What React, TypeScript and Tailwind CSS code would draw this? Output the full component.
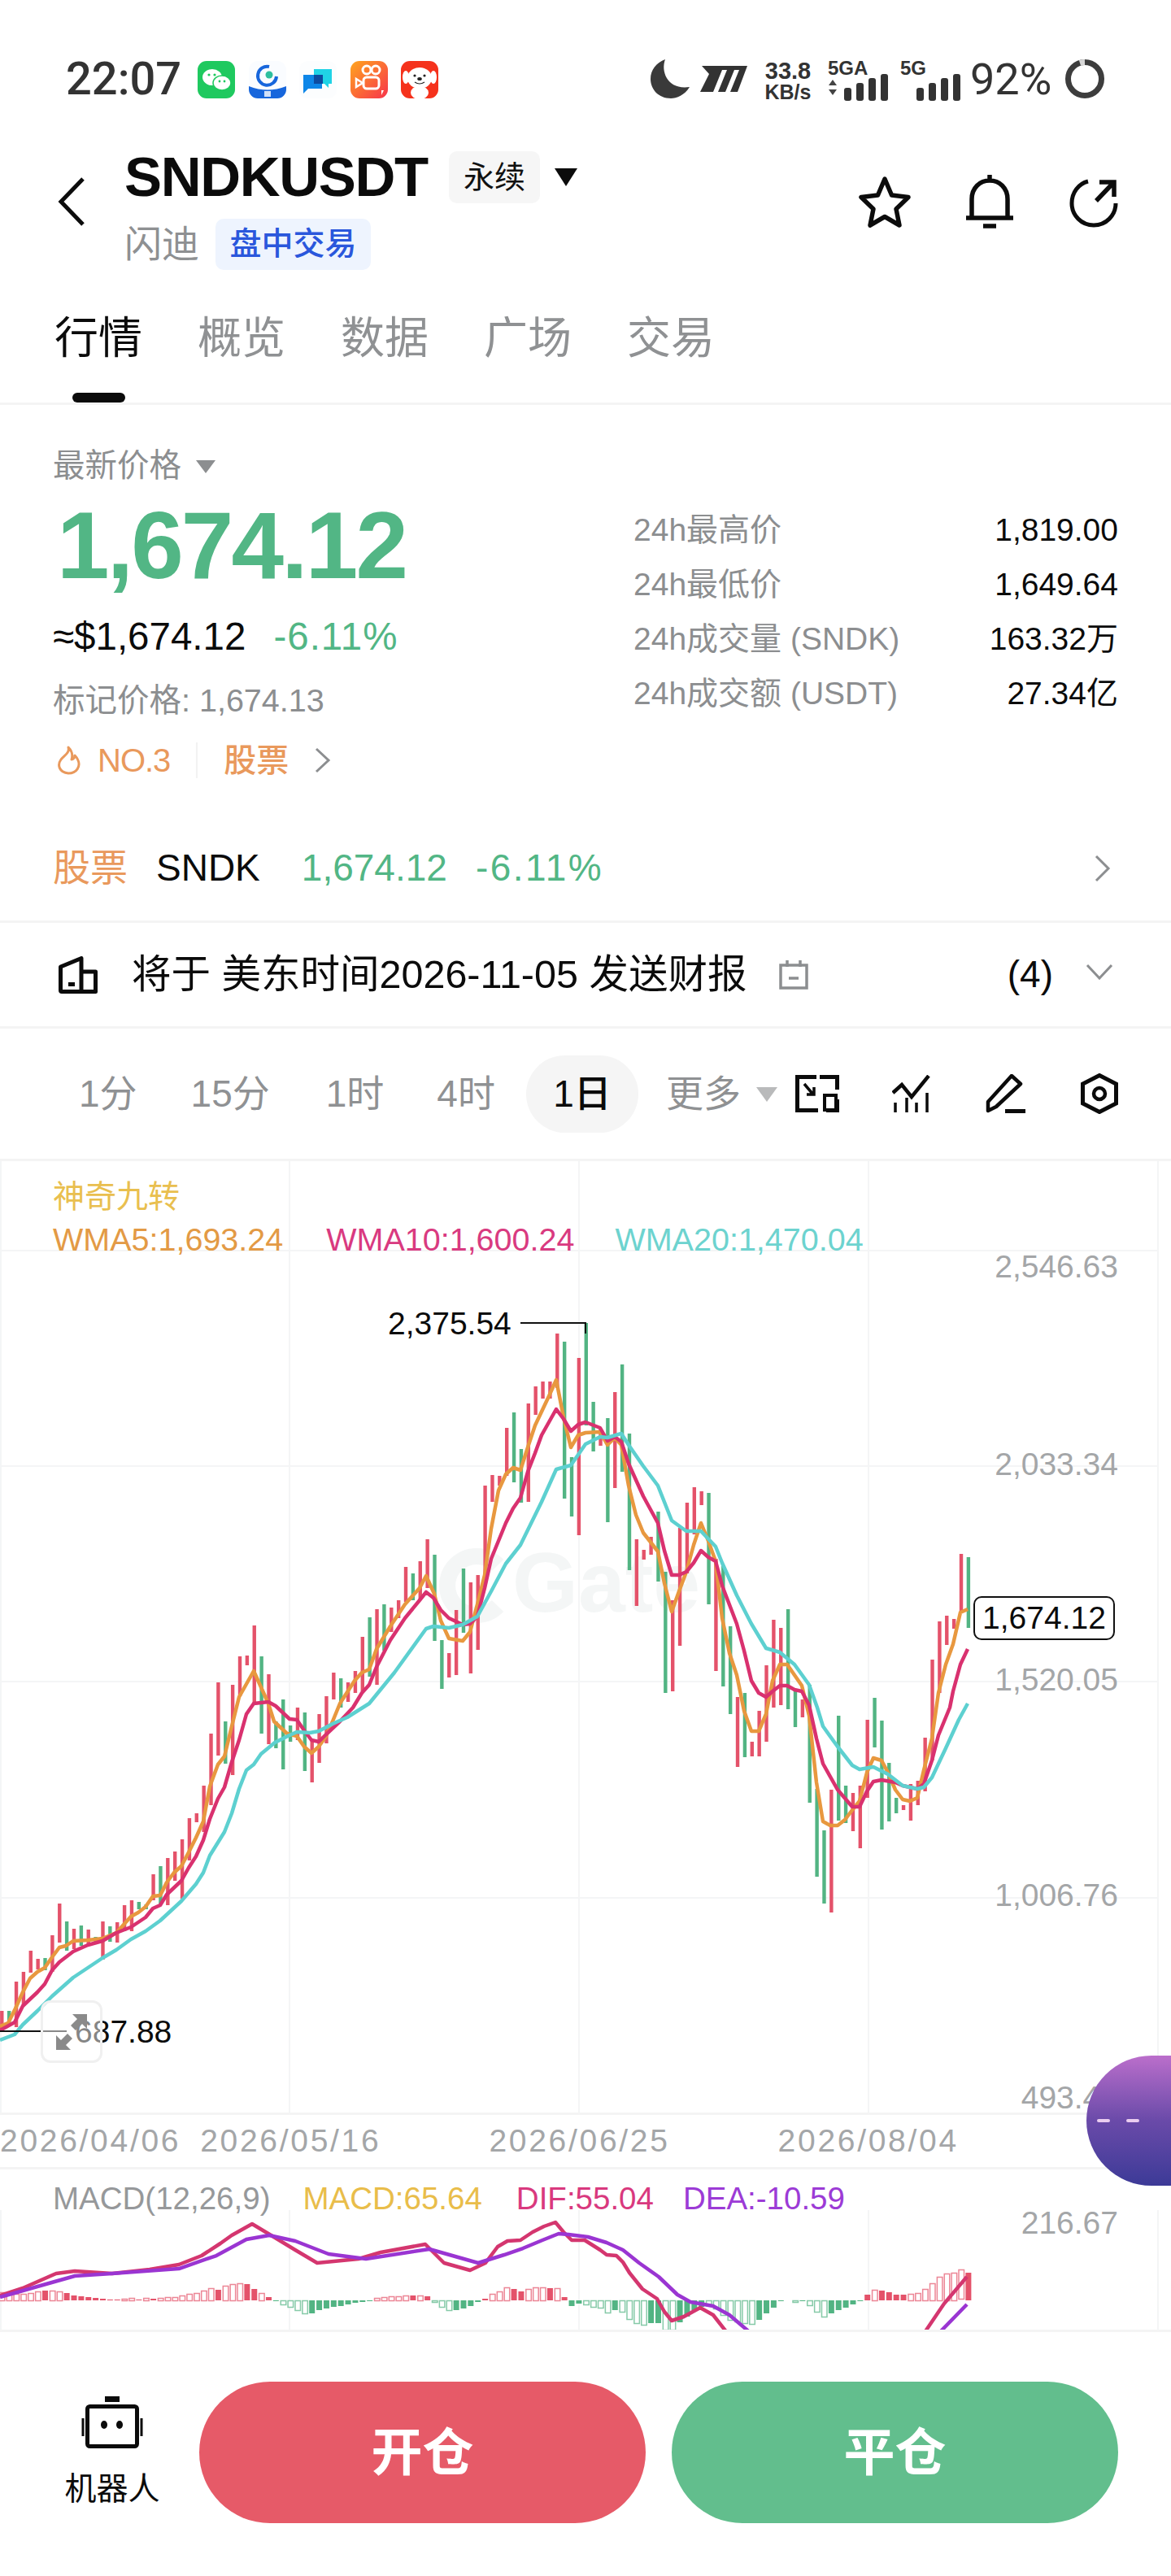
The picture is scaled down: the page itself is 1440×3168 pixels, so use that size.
const RED = "#e4526a";
const GREEN = "#52b483";

// [top, bottom, green?] per daily bar, x comes from the index
const candles: [number, number, number][] = [
  [2473, 2497, 0], [2473, 2490, 1], [2437, 2493, 0], [2425, 2467, 0], [2399, 2426, 0], [2409, 2422, 0], [2408, 2423, 1], [2380, 2425, 0],
  [2341, 2389, 0], [2363, 2399, 1], [2372, 2397, 0], [2368, 2393, 1], [2373, 2392, 0], [2382, 2390, 1], [2363, 2410, 0], [2369, 2388, 1],
  [2364, 2389, 0], [2343, 2375, 0], [2337, 2375, 0], [2339, 2348, 1], [2342, 2348, 1], [2305, 2337, 0], [2295, 2342, 1], [2285, 2343, 0],
  [2277, 2313, 0], [2262, 2335, 0], [2236, 2288, 0], [2230, 2241, 0], [2196, 2253, 0], [2132, 2220, 0], [2069, 2159, 0], [2117, 2169, 1],
  [2072, 2183, 0], [2037, 2086, 0], [2036, 2048, 0], [1999, 2095, 0], [2037, 2132, 1], [2059, 2145, 0], [2117, 2150, 1], [2090, 2176, 1],
  [2122, 2142, 1], [2100, 2140, 0], [2106, 2178, 1], [2140, 2192, 0], [2108, 2168, 0], [2086, 2144, 0], [2057, 2090, 0], [2064, 2100, 1],
  [2069, 2093, 0], [2055, 2082, 0], [2013, 2080, 0], [1989, 2062, 1], [1979, 2072, 0], [1973, 2030, 1], [1977, 2007, 0], [1968, 1990, 0],
  [1927, 1970, 0], [1935, 1968, 1], [1920, 1967, 0], [1893, 1953, 0], [1912, 2018, 1], [2017, 2077, 1], [2033, 2063, 0], [1980, 2060, 0],
  [1929, 2008, 1], [1946, 2058, 0], [1937, 2029, 0], [1827, 1947, 0], [1814, 1847, 0], [1815, 1827, 0], [1756, 1815, 0], [1737, 1823, 1],
  [1782, 1848, 1], [1726, 1847, 0], [1705, 1740, 0], [1699, 1720, 0], [1699, 1720, 0], [1640, 1707, 0], [1650, 1843, 1], [1792, 1865, 1],
  [1670, 1888, 0], [1627, 1753, 1], [1724, 1785, 1], [1757, 1778, 0], [1744, 1872, 1], [1712, 1830, 0], [1678, 1810, 1], [1763, 1931, 1],
  [1893, 1975, 0], [1906, 1918, 0], [1890, 1912, 0], [1859, 1945, 1], [1933, 2082, 1], [1968, 2080, 0], [1879, 2024, 0], [1848, 1935, 0],
  [1829, 1887, 0], [1834, 1851, 0], [1836, 1973, 1], [1917, 2055, 0], [1925, 2074, 1], [2000, 2108, 1], [2087, 2173, 0], [2082, 2161, 1],
  [2142, 2160, 0], [2104, 2160, 0], [2048, 2142, 0], [1992, 2100, 0], [2002, 2097, 0], [1979, 2102, 1], [2078, 2124, 1], [2090, 2112, 0],
  [2072, 2217, 1], [2200, 2308, 1], [2251, 2341, 1], [2201, 2352, 0], [2110, 2239, 1], [2196, 2242, 1], [2205, 2252, 0], [2196, 2273, 0],
  [2115, 2211, 0], [2088, 2149, 1], [2116, 2250, 1], [2168, 2240, 1], [2211, 2230, 1], [2220, 2226, 0], [2194, 2239, 0], [2190, 2220, 0],
  [2137, 2203, 0], [2041, 2165, 0], [1994, 2082, 0], [1987, 2023, 0], [1991, 2003, 0], [1911, 1983, 0], [1915, 2002, 1],
];

const wma5 =
  "0,2492 10,2488 19,2470 28,2450 37,2433 46,2425 55,2420 64,2407 73,2395 81,2393 90,2387 108,2386 126,2384 143,2377 152,2367 161,2357 170,2352 179,2345 188,2332 197,2331 205,2315 214,2303 223,2295 232,2278 241,2260 250,2240 258,2197 268,2170 276,2160 285,2123 294,2087 312,2055 330,2095 337,2117 353,2132 365,2135 374,2148 383,2156 392,2148 401,2135 409,2117 418,2095 436,2067 445,2057 454,2053 463,2028 480,2000 498,1973 516,1953 524,1938 534,1960 542,1993 552,2015 569,2018 578,2007 587,1973 596,1937 604,1880 613,1833 622,1813 631,1805 640,1808 649,1780 658,1753 675,1717 684,1697 693,1743 702,1780 711,1765 720,1762 738,1761 747,1777 756,1768 764,1777 773,1827 782,1863 791,1885 809,1908 817,1947 826,1982 835,1957 844,1933 853,1900 862,1873 871,1895 880,1920 888,1990 897,2033 906,2060 915,2104 924,2129 933,2129 942,2108 950,2067 959,2047 968,2047 977,2060 986,2073 995,2110 1004,2192 1012,2240 1021,2245 1030,2245 1039,2238 1048,2226 1057,2215 1066,2180 1074,2162 1084,2165 1092,2180 1101,2201 1110,2213 1119,2215 1128,2211 1136,2177 1146,2138 1154,2082 1163,2047 1172,2022 1181,1983 1190,1979";
const wma10 =
  "0,2497 18,2487 28,2467 46,2450 55,2440 64,2423 73,2413 90,2400 108,2392 126,2387 143,2377 161,2370 179,2358 188,2347 197,2343 205,2330 223,2313 232,2297 241,2283 250,2263 258,2237 268,2212 276,2198 285,2167 294,2140 303,2108 312,2095 330,2093 339,2098 356,2114 365,2115 374,2128 383,2140 392,2142 401,2133 418,2117 434,2100 445,2082 454,2072 463,2050 480,2017 498,1990 516,1968 524,1958 533,1965 542,1980 552,1990 569,1998 578,1997 587,1988 596,1953 604,1917 622,1873 631,1855 640,1842 649,1810 658,1787 666,1765 684,1733 693,1745 702,1760 711,1752 720,1749 738,1756 747,1772 756,1767 764,1773 773,1800 791,1840 809,1873 817,1907 826,1937 835,1937 844,1933 853,1922 862,1907 871,1915 880,1920 888,1950 906,1997 915,2030 924,2067 933,2082 942,2087 950,2080 959,2073 968,2073 977,2078 986,2080 995,2097 1004,2138 1012,2169 1030,2201 1048,2222 1057,2222 1066,2203 1074,2191 1084,2189 1101,2192 1110,2196 1128,2200 1136,2194 1146,2165 1154,2134 1168,2100 1172,2080 1181,2047 1190,2028";
const wma20 =
  "0,2509 18,2502 28,2490 46,2473 64,2455 90,2432 126,2408 143,2398 161,2385 179,2375 197,2362 223,2338 241,2317 250,2303 258,2282 276,2253 285,2230 294,2200 303,2177 312,2170 321,2157 338,2143 354,2135 365,2130 381,2131 392,2129 409,2120 427,2112 454,2095 485,2057 524,2003 533,2000 552,2002 569,1998 587,1988 604,1957 622,1923 640,1900 666,1847 684,1807 702,1802 720,1776 738,1767 747,1768 764,1763 773,1777 791,1803 809,1827 826,1870 844,1883 862,1883 880,1902 888,1922 906,1962 924,1997 942,2027 959,2032 977,2047 995,2072 1005,2100 1012,2123 1030,2148 1048,2171 1057,2176 1074,2173 1092,2182 1110,2196 1128,2200 1136,2198 1146,2186 1163,2150 1179,2115 1190,2095";

const dif =
  "0,2823 28,2814 69,2796 92,2793 138,2796 184,2791 220,2785 248,2774 271,2759 285,2749 310,2735 335,2750 363,2767 390,2783 441,2778 468,2770 523,2760 546,2783 578,2792 597,2783 612,2763 624,2756 640,2755 655,2745 669,2738 683,2733 693,2745 703,2755 719,2755 738,2767 746,2773 758,2774 766,2782 774,2795 790,2815 808,2827 817,2843 826,2854 841,2849 861,2838 877,2847 895,2870";
const difEnd = "1136,2870 1161,2833 1189,2800";
const dea =
  "0,2825 46,2812 92,2799 138,2796 220,2790 266,2774 303,2754 331,2749 363,2756 404,2772 450,2778 528,2766 588,2783 620,2773 643,2765 667,2755 687,2747 699,2748 723,2751 746,2758 766,2767 786,2783 810,2800 833,2822 849,2831 877,2836 897,2847 924,2870";
const deaEnd = "1154,2870 1189,2834";

// [height above the zero line in px, hollow?]
const hist: [number, number][] = [
  [10, 1], [9, 1], [8, 1], [8, 1], [9, 1], [11, 1], [12, 0], [12, 1], [11, 1], [9, 0], [6, 0], [5, 0], [4, 0], [3, 0], [2, 0], [1, 0],
  [1, 0], [2, 1], [3, 1], [1, 0], [3, 1], [2, 0], [3, 1], [4, 1], [4, 1], [6, 1], [8, 1], [9, 1], [12, 1], [15, 1], [13, 0], [18, 1],
  [20, 1], [21, 1], [20, 0], [14, 0], [9, 1], [4, 0], [-1, 0], [-5, 1], [-8, 1], [-12, 1], [-16, 1], [-16, 0], [-12, 0], [-10, 0], [-8, 0], [-7, 0],
  [-5, 0], [-3, 0], [-2, 0], [-1, 0], [3, 1], [4, 1], [5, 1], [5, 1], [6, 1], [6, 0], [6, 1], [5, 0], [-2, 1], [-8, 1], [-12, 1], [-12, 0],
  [-10, 0], [-7, 0], [-2, 0], [2, 0], [8, 1], [11, 1], [16, 1], [14, 0], [11, 0], [14, 1], [16, 1], [16, 1], [15, 0], [15, 1], [4, 0], [-7, 0],
  [-4, 0], [-5, 1], [-8, 1], [-9, 1], [-15, 1], [-12, 0], [-14, 1], [-23, 1], [-28, 1], [-30, 1], [-28, 0], [-28, 0], [-36, 1], [-36, 1], [-27, 0], [-20, 0],
  [-12, 0], [-8, 0], [-6, 1], [-10, 1], [-18, 1], [-24, 1], [-26, 1], [-28, 1], [-29, 1], [-24, 0], [-16, 0], [-9, 0], [-1, 0], [0, 0], [-2, 1], [-1, 0],
  [-6, 1], [-14, 1], [-20, 1], [-16, 0], [-12, 0], [-9, 0], [-5, 0], [-1, 0], [7, 0], [13, 1], [12, 0], [10, 0], [7, 0], [7, 0], [8, 1], [9, 1],
  [14, 1], [21, 1], [29, 1], [33, 1], [34, 1], [38, 1], [34, 0],
];

const barX = (i: number) => 2.3 + i * 8.87;

function StatusBar() {
  return (
    <div className="flex h-[170px] items-start pl-[81px] pt-[73px] text-[#333]">
      <span className="w-[162px] font-['Roboto'] text-[56px] font-medium leading-[48px]">22:07</span>
      <div className="flex gap-[16.5px] pt-[2px]">
        <svg width="46" height="46" viewBox="0 0 46 46">
          <rect width="46" height="46" rx="11" fill="#1fc95f" />
          <ellipse cx="18" cy="20" rx="12" ry="10" fill="#fff" />
          <ellipse cx="30" cy="27" rx="11" ry="9" fill="#fff" stroke="#1fc95f" strokeWidth="1.5" />
          <circle cx="14" cy="17" r="1.6" fill="#1fc95f" />
          <circle cx="21" cy="17" r="1.6" fill="#1fc95f" />
          <circle cx="27" cy="25" r="1.4" fill="#1fc95f" />
          <circle cx="33" cy="25" r="1.4" fill="#1fc95f" />
        </svg>
        <svg width="46" height="46" viewBox="0 0 46 46">
          <rect width="46" height="46" rx="11" fill="#fafcff" />
          <path d="M0 31Q23 40 46 31V35A11 11 0 0 1 35 46H11A11 11 0 0 1 0 35Z" fill="#1766dc" />
          <path d="M25 7A11.5 11.5 0 1 0 34 19" fill="none" stroke="#1766dc" strokeWidth="4" />
          <circle cx="25" cy="17" r="4.5" fill="#2fbf9e" />
          <rect x="19" y="37" width="8" height="7" fill="#fff" opacity=".8" />
        </svg>
        <svg width="46" height="46" viewBox="0 0 46 46">
          <rect width="46" height="46" rx="11" fill="#fcfdfe" />
          <path d="M18 10H40V28H36V33L31 28H18Z" fill="#20d3e6" />
          <path d="M5 17H28V34H11L5 40Z" fill="#0d86e8" />
          <rect x="18" y="17" width="11" height="11" fill="#0c4ba0" />
        </svg>
        <svg width="46" height="46" viewBox="0 0 46 46">
          <defs>
            <linearGradient id="ks" x1="0" y1="0" x2="1" y2="1">
              <stop offset="0" stopColor="#ffa51f" />
              <stop offset="1" stopColor="#f7344b" />
            </linearGradient>
          </defs>
          <rect width="46" height="46" rx="11" fill="url(#ks)" />
          <circle cx="20" cy="11" r="5" fill="none" stroke="#fff" strokeWidth="3" />
          <circle cx="31" cy="11" r="5" fill="none" stroke="#fff" strokeWidth="3" />
          <rect x="16" y="20" width="19" height="14" rx="4" fill="none" stroke="#fff" strokeWidth="3" />
          <path d="M15 27L7 22V32Z" fill="none" stroke="#fff" strokeWidth="2.5" />
          <path d="M38 36L41 36L38 42" fill="#fff" />
        </svg>
        <svg width="46" height="46" viewBox="0 0 46 46">
          <rect width="46" height="46" rx="11" fill="#f5321c" />
          <ellipse cx="23" cy="39" rx="11" ry="8" fill="#fff" />
          <ellipse cx="23" cy="21" rx="15" ry="13" fill="#fff" />
          <ellipse cx="6" cy="20" rx="4" ry="8" fill="#fff" />
          <ellipse cx="40" cy="20" rx="4" ry="8" fill="#fff" />
          <circle cx="17" cy="18" r="1.6" fill="#222" />
          <circle cx="29" cy="18" r="1.6" fill="#222" />
          <ellipse cx="23" cy="22" rx="2.8" ry="2" fill="#222" />
          <path d="M17 26Q23 30 29 26" fill="none" stroke="#222" strokeWidth="1.2" />
        </svg>
      </div>
      <div className="ml-[261px] flex items-start">
        <svg width="48" height="48" viewBox="0 0 48 48" className="mr-[13px]">
          <path d="M18 0C12 16 22 38 48 34C42 44 32 48 25 48C10 48 0 37 0 24C0 13 7 4 18 0Z" fill="#3a3a3a" />
        </svg>
        <svg width="58" height="34" viewBox="0 0 58 34" className="mr-[20px] mt-[8px]">
          <path d="M2 0H58L46 32H37L48 5H42L31 32H22L33 5H27L16 32H0L11 10Z" fill="#333" />
        </svg>
        <div className="mr-[19px] flex w-[60px] flex-col items-center font-['Liberation_Sans'] text-[29px] font-bold leading-[28px]">
          <span>33.8</span>
          <span className="text-[25px] leading-[24px]">KB/s</span>
        </div>
        <div className="w-[88px]">
          <div className="font-['Liberation_Sans'] text-[24px] font-bold leading-[22px]">5GA</div>
          <svg width="76" height="33" viewBox="0 0 76 33" className="-mt-[4px]">
            <path d="M1 14L6 7L11 14ZM1 19L6 26L11 19Z" fill="#444" />
            <rect x="20" y="17" width="9" height="16" rx="3" fill="#333" />
            <rect x="35" y="11" width="9" height="22" rx="3" fill="#333" />
            <rect x="50" y="5" width="9" height="28" rx="3" fill="#333" />
            <rect x="65" y="0" width="9" height="33" rx="3" fill="#333" />
          </svg>
        </div>
        <div className="ml-[1px] w-[87px]">
          <div className="font-['Liberation_Sans'] text-[24px] font-bold leading-[22px]">5G</div>
          <svg width="76" height="33" viewBox="0 0 76 33" className="-mt-[4px]">
            <rect x="20" y="17" width="9" height="16" rx="3" fill="#333" />
            <rect x="35" y="11" width="9" height="22" rx="3" fill="#333" />
            <rect x="50" y="5" width="9" height="28" rx="3" fill="#333" />
            <rect x="65" y="0" width="9" height="33" rx="3" fill="#333" />
          </svg>
        </div>
        <span className="-ml-[1px] mt-[2px] font-['Roboto'] text-[54px] leading-[46px]">92%</span>
        <svg width="50" height="50" viewBox="0 0 50 50" className="ml-[16px] -mt-[1px]">
          <circle cx="25" cy="25" r="20.5" fill="none" stroke="#3d3d3d" strokeWidth="7" />
          <path d="M19 5.5A20.5 20.5 0 0 1 25 4.5" fill="none" stroke="#d8d8d8" strokeWidth="7" />
        </svg>
      </div>
    </div>
  );
}

function Header() {
  return (
    <div className="flex h-[178px] pl-[71px] pr-[65px]">
      <svg width="34" height="62" viewBox="0 0 34 62" className="mt-[47px] shrink-0">
        <path d="M31 3L4 31L31 59" fill="none" stroke="#0c0c0c" strokeWidth="5" />
      </svg>
      <div className="ml-[48px]">
        <div className="mt-[16px] flex h-[64px] items-center">
          <span className="text-[69px] font-bold leading-[64px] tracking-[-1.3px] text-[#0b0b0b]">SNDKUSDT</span>
          <span className="ml-[26px] flex h-[64px] w-[112px] items-center justify-center rounded-[10px] bg-[#f6f6f6] text-[38px] text-[#111]">永续</span>
          <span className="ml-[18px] h-0 w-0 border-x-[14px] border-t-[22px] border-x-transparent border-t-[#0c0c0c]" />
        </div>
        <div className="mt-[19px] flex h-[63px] items-center">
          <span className="text-[46px] text-[#8e9092]">闪迪</span>
          <span className="ml-[20px] flex h-[63px] w-[191px] items-center justify-center rounded-[10px] bg-[#eef4fe] text-[39px] font-medium text-[#2a57dc]">盘中交易</span>
        </div>
      </div>
      <div className="ml-auto mt-[45px] flex h-[66px] items-start">
        <svg width="66" height="64" viewBox="0 0 66 64" className="mt-[1px]">
          <path d="M33 4L41.5 24L62 26.5L47 41L51 61L33 50.5L15 61L19 41L4 26.5L24.5 24Z" fill="none" stroke="#0c0c0c" strokeWidth="5.5" strokeLinejoin="round" />
        </svg>
        <svg width="58" height="66" viewBox="0 0 58 66" className="ml-[67px]">
          <path d="M29 0V7M7 52V30C7 16 17 7 29 7C41 7 51 16 51 30V52M0 53H58M21 63H37" fill="none" stroke="#0c0c0c" strokeWidth="5.5" />
        </svg>
        <svg width="60" height="60" viewBox="0 0 60 60" className="ml-[69px] mt-[5px]">
          <path d="M23 3C11 6 3 17 3 30C3 45 15 57 30 57C45 57 57 45 57 30" fill="none" stroke="#0c0c0c" strokeWidth="5" />
          <path d="M33 27L53 6M37 4H55V22" fill="none" stroke="#0c0c0c" strokeWidth="5.5" />
        </svg>
      </div>
    </div>
  );
}

function Tabs() {
  return (
    <div className="flex h-[150px] gap-[68px] border-b-[3px] border-[#f4f4f4] pl-[67px] pt-[34px] text-[54px] leading-[68px] text-[#8f9193]">
      <div className="flex w-[108px] flex-col items-center">
        <span className="text-[#0b0b0b]">行情</span>
        <span className="mt-[33px] h-[12px] w-[65px] rounded-[6px] bg-[#0b0b0b]" />
      </div>
      <span>概览</span>
      <span>数据</span>
      <span>广场</span>
      <span>交易</span>
    </div>
  );
}

const stats = [
  ["24h最高价", "1,819.00"],
  ["24h最低价", "1,649.64"],
  ["24h成交量 (SNDK)", "163.32万"],
  ["24h成交额 (USDT)", "27.34亿"],
];

function PriceBlock() {
  return (
    <div className="flex h-[505px]">
      <div className="w-[779px] pl-[65px] pt-[54px]">
        <div className="flex h-[42px] items-center text-[39.5px] text-[#8c8e90]">
          最新价格
          <span className="ml-[18px] mt-[2px] h-0 w-0 border-x-[12px] border-t-[16px] border-x-transparent border-t-[#8c8e90]" />
        </div>
        <div className="mt-[22px] h-[110px] pl-[5px] text-[116px] font-bold leading-[110px] tracking-[-2.8px] text-[#52b685]">1,674.12</div>
        <div className="mt-[35px] flex h-[44px] items-center text-[47.5px] leading-[44px]">
          <span className="text-[#0b0b0b]">≈$1,674.12</span>
          <span className="ml-[34px] tracking-[1px] text-[#52b685]">-6.11%</span>
        </div>
        <div className="mt-[34px] h-[44px] text-[39.5px] leading-[44px] text-[#8c8e90]">标记价格: 1,674.13</div>
        <div className="mt-[30px] flex h-[44px] items-center text-[40px] font-medium text-[#e9995c]">
          <svg width="30" height="36" viewBox="0 0 30 36" className="ml-[5px]">
            <path d="M14 2C16 9 9 12 5 17C0 24 3 33 14 34C25 34 29 25 26 18C25 15 23 13 22 12C22 15 20 17 18 17C20 11 18 6 14 2Z" fill="none" stroke="#e9995c" strokeWidth="3" strokeLinejoin="round" />
          </svg>
          <span className="ml-[20px] tracking-[-1px]">NO.3</span>
          <span className="ml-[32px] h-[44px] w-[2px] bg-[#f2f2f2]" />
          <span className="ml-[32px]">股票</span>
          <svg width="20" height="32" viewBox="0 0 20 32" className="ml-[32px]">
            <path d="M2 2L17 16L2 30" fill="none" stroke="#8c8e90" strokeWidth="3" />
          </svg>
        </div>
      </div>
      <div className="w-[596px] pt-[121px]">
        {stats.map(([label, value]) => (
          <div key={label} className="flex h-[67px] items-center justify-between text-[39px]">
            <span className="text-[#8c8e90]">{label}</span>
            <span className="text-[#0b0b0b]">{value}</span>
          </div>
        ))}
      </div>
    </div>
  );
}

function StockRow() {
  return (
    <div className="flex h-[132px] items-center border-b-[3px] border-[#f4f4f4] pl-[65px] pr-[74px] text-[46px]">
      <span className="text-[#e9995c]">股票</span>
      <span className="ml-[35px] text-[#0b0b0b]">SNDK</span>
      <span className="ml-[51px] text-[#52b685]">1,674.12</span>
      <span className="ml-[35px] tracking-[2.5px] text-[#52b685]">-6.11%</span>
      <svg width="20" height="34" viewBox="0 0 20 34" className="ml-auto">
        <path d="M2 2L17 17L2 32" fill="none" stroke="#8c8e90" strokeWidth="3" />
      </svg>
    </div>
  );
}

function EarningsRow() {
  return (
    <div className="flex h-[130px] items-center border-b-[3px] border-[#f4f4f4] pl-[72px] pr-[71px]">
      <svg width="48" height="46" viewBox="0 0 48 46">
        <path d="M2.5 13L28 2.5V43.5H4A1.5 1.5 0 0 1 2.5 42ZM28 19H45.5V43.5H28" fill="none" stroke="#0b0b0b" strokeWidth="5" strokeLinejoin="round" />
        <rect x="12" y="32" width="8" height="5" fill="#0b0b0b" />
      </svg>
      <span className="ml-[42px] text-[48.5px] text-[#0b0b0b]">将于 美东时间2026-11-05 发送财报</span>
      <svg width="36" height="36" viewBox="0 0 36 36" className="ml-[40px]">
        <path d="M2 6H34V34H2ZM10 0V8M26 0V8M12 22H24" fill="none" stroke="#8c8e90" strokeWidth="3.5" />
      </svg>
      <span className="ml-auto text-[46px] text-[#0b0b0b]">(4)</span>
      <svg width="34" height="20" viewBox="0 0 34 20" className="ml-[40px] -mt-[8px]">
        <path d="M2 2L17 18L32 2" fill="none" stroke="#8c8e90" strokeWidth="3" />
      </svg>
    </div>
  );
}

function Timeframes() {
  return (
    <div className="flex h-[163px] items-center border-b-[3px] border-[#f4f4f4] pl-[97px] text-[46px] text-[#8f9193]">
      <span>1分</span>
      <span className="ml-[66px]">15分</span>
      <span className="ml-[69px]">1时</span>
      <span className="ml-[65px]">4时</span>
      <span className="ml-[38px] flex h-[95px] w-[138px] items-center justify-center rounded-[48px] bg-[#f5f5f5] font-medium text-[#0b0b0b]">1日</span>
      <span className="ml-[34px]">更多</span>
      <span className="ml-[19px] mt-[2px] h-0 w-0 border-x-[13px] border-t-[18px] border-x-transparent border-t-[#b9babb]" />
      <svg width="54" height="46" viewBox="0 0 54 46" className="ml-[22px]">
        <path d="M26 2.5H2.5V43.5H28M30 2.5H51.5V18M51.5 30V43.5H38" fill="none" stroke="#0b0b0b" strokeWidth="5" />
        <rect x="36" y="25" width="14" height="18" fill="none" stroke="#0b0b0b" strokeWidth="4" />
        <path d="M11 11L22 24M23 15V24H14" fill="none" stroke="#0b0b0b" strokeWidth="3.5" />
      </svg>
      <svg width="48" height="46" viewBox="0 0 48 46" className="ml-[65px]">
        <path d="M1 22L12 12L24 27L45 1" fill="none" stroke="#0b0b0b" strokeWidth="4.5" />
        <path d="M4 34V46M18 28V46M30 34V46M43 22V46" fill="none" stroke="#0b0b0b" strokeWidth="3.5" />
      </svg>
      <svg width="50" height="48" viewBox="0 0 50 48" className="ml-[67px]">
        <path d="M32 2L43 12L13 40L3 45V34Z" fill="none" stroke="#0b0b0b" strokeWidth="4.5" strokeLinejoin="round" />
        <path d="M24 45.5H49" fill="none" stroke="#0b0b0b" strokeWidth="5" />
      </svg>
      <svg width="46" height="50" viewBox="0 0 46 50" className="ml-[67px]">
        <path d="M23 2.5L43.5 13V37L23 47.5L2.5 37V13Z" fill="none" stroke="#0b0b0b" strokeWidth="5" />
        <circle cx="23" cy="25" r="7" fill="none" stroke="#0b0b0b" strokeWidth="4.5" />
      </svg>
    </div>
  );
}

function PriceChart() {
  return (
    <svg viewBox="0 1428 1440 1170" className="absolute left-0 top-0 h-[1170px] w-[1440px]">
      <text x="630" y="1982" fontFamily="Liberation Sans" fontWeight="700" fontSize="104" fill="#f4f6f6">Gate</text>
      <path d="M612 1925A36 36 0 1 0 612 1975" fill="none" stroke="#f4f6f6" strokeWidth="20" />
      <path d="M1 1428V2598M356 1428V2598M712 1428V2598M1068 1428V2598M1424 1428V2598M0 1538H1424M0 1803H1424M0 2068H1424M0 2334H1424" fill="none" stroke="#f4f5f6" strokeWidth="2" />
      {candles.map(([top, bottom, green], i) => (
        <rect key={i} x={barX(i) - 2.2} y={top} width="4.4" height={bottom - top} fill={green ? GREEN : RED} />
      ))}
      <polyline points={wma5} fill="none" stroke="#e8983f" strokeWidth="4.5" strokeLinejoin="round" />
      <polyline points={wma10} fill="none" stroke="#d9316f" strokeWidth="4.5" strokeLinejoin="round" />
      <polyline points={wma20} fill="none" stroke="#5dd0d0" strokeWidth="4.5" strokeLinejoin="round" />
      <path d="M640 1627H720V1640M0 2498H82" fill="none" stroke="#111" strokeWidth="2" />
    </svg>
  );
}

function MacdChart() {
  return (
    <svg viewBox="0 2668 1440 197" className="absolute left-0 top-0 h-[197px] w-[1440px]">
      <path d="M1 2718V2865M356 2718V2865M712 2718V2865M1068 2718V2865M1424 2718V2865" fill="none" stroke="#f4f5f6" strokeWidth="2" />
      {hist.map(([h, hollow], i) => {
        const color = h > 0 ? RED : GREEN;
        const y = h > 0 ? 2829 - h : 2829;
        const height = Math.min(Math.abs(h), 36);
        if (height === 0) return null;
        if (hollow) {
          return <rect key={i} x={barX(i) - 3} y={y + 0.5} width="6.5" height={height} fill="#fff" stroke={color} strokeOpacity=".7" strokeWidth="1.5" />;
        }
        return <rect key={i} x={barX(i) - 3.5} y={y} width="7" height={height} fill={color} />;
      })}
      <polyline points={dif} fill="none" stroke="#d4366f" strokeWidth="4.5" strokeLinejoin="round" />
      <polyline points={difEnd} fill="none" stroke="#d4366f" strokeWidth="4.5" />
      <polyline points={dea} fill="none" stroke="#9a35d2" strokeWidth="4.5" strokeLinejoin="round" />
      <polyline points={deaEnd} fill="none" stroke="#9a35d2" strokeWidth="4.5" />
    </svg>
  );
}

function ChartArea() {
  return (
    <div className="relative">
      <div className="relative h-[1170px] text-[39px] leading-[44px]">
        <PriceChart />
        <div className="relative pl-[65px] pt-[22px]">
          <div className="text-[#e9bf4f]">神奇九转</div>
          <div className="mt-[8px] flex text-[39.5px]">
            <span className="text-[#e39a45]">WMA5:1,693.24</span>
            <span className="ml-[53px] text-[#d93a80]">WMA10:1,600.24</span>
            <span className="ml-[50px] text-[#6dd3cf]">WMA20:1,470.04</span>
          </div>
        </div>
        <span className="absolute right-[65px] top-[108px] text-[#a4a6a8]">2,546.63</span>
        <span className="absolute right-[65px] top-[351px] text-[#a4a6a8]">2,033.34</span>
        <span className="absolute right-[65px] top-[616px] text-[#a4a6a8]">1,520.05</span>
        <span className="absolute right-[65px] top-[881px] text-[#a4a6a8]">1,006.76</span>
        <span className="absolute right-[65px] top-[1130px] text-[#a4a6a8]">493.45</span>
        <span className="absolute left-[477px] top-[178px] text-[#0b0b0b]">2,375.54</span>
        <span className="absolute left-[1197px] top-[535px] flex h-[54px] w-[174px] items-center justify-center rounded-[10px] border-2 border-[#111] bg-white text-[#0b0b0b]">1,674.12</span>
        <span className="absolute left-[92px] top-[1049px] text-[#0b0b0b]">687.88</span>
        <div className="absolute left-[50px] top-[1032px] flex h-[77px] w-[76px] items-center justify-center rounded-[12px] border-[3px] border-[#f0f0f0] bg-white/50">
          <svg width="40" height="46" viewBox="0 0 40 46">
            <path d="M1 27V45H19L13 39L21 31L15 25L7 33ZM39 19V1H21L27 7L19 15L25 21L33 13Z" fill="#8a8a8a" />
          </svg>
        </div>
      </div>
      <div className="relative flex h-[70px] items-center border-y-[3px] border-[#f4f4f4] text-[39px] tracking-[2.7px] text-[#a4a6a8]">
        <span>2026/04/06</span>
        <span className="ml-[24px]">2026/05/16</span>
        <span className="ml-[133px]">2026/06/25</span>
        <span className="ml-[133px]">2026/08/04</span>
      </div>
      <div className="relative h-[197px] text-[38.5px] leading-[44px]">
        <MacdChart />
        <div className="relative flex pl-[65px] pt-[14px]">
          <span className="text-[#96989a]">MACD(12,26,9)</span>
          <span className="ml-[40px] text-[#e9bd4a]">MACD:65.64</span>
          <span className="ml-[42px] text-[#d9397e]">DIF:55.04</span>
          <span className="ml-[36px] text-[#9c3bd6]">DEA:-10.59</span>
        </div>
        <span className="absolute right-[65px] top-[44px] text-[39px] text-[#a4a6a8]">216.67</span>
      </div>
      <div className="absolute left-[1336px] top-[1100px] flex h-[160px] w-[104px] items-center gap-[20px] rounded-l-[80px] bg-linear-to-b from-[#bb6ecb] via-[#6a4aa9] to-[#3c3a97] pl-[13px]">
        <span className="h-[4px] w-[16px] rounded-full bg-[#eacdf0]" />
        <span className="h-[4px] w-[16px] rounded-full bg-[#eacdf0]" />
      </div>
    </div>
  );
}

function BottomBar() {
  return (
    <div className="flex border-t-[3px] border-[#f4f4f4] pl-[79px] pr-[65px] pt-[61px]">
      <div className="flex w-[118px] flex-col items-center">
        <svg width="76" height="64" viewBox="0 0 76 64" className="mt-[18px]">
          <rect x="29" y="0" width="18" height="7" fill="#0b0b0b" />
          <rect x="7.5" y="12.5" width="61" height="49" rx="3" fill="none" stroke="#0b0b0b" strokeWidth="5" />
          <path d="M2 27V49M74 27V49" stroke="#0b0b0b" strokeWidth="3" />
          <ellipse cx="28" cy="35" rx="4" ry="5" fill="#0b0b0b" />
          <ellipse cx="47" cy="35" rx="4" ry="5" fill="#0b0b0b" />
        </svg>
        <span className="mt-[28px] text-[39px] leading-[44px] text-[#0b0b0b]">机器人</span>
      </div>
      <button className="ml-[48px] flex h-[174px] w-[549px] items-center justify-center rounded-[87px] bg-[#e65a68] text-[63px] font-bold text-white">开仓</button>
      <button className="ml-[32px] flex h-[174px] w-[549px] items-center justify-center rounded-[87px] bg-[#62be8d] text-[63px] font-bold text-white">平仓</button>
    </div>
  );
}

export default function App() {
  return (
    <div className="h-[3168px] w-[1440px] overflow-hidden bg-white font-['Liberation_Sans','Noto_Sans_CJK_SC',sans-serif]">
      <StatusBar />
      <Header />
      <Tabs />
      <PriceBlock />
      <StockRow />
      <EarningsRow />
      <Timeframes />
      <ChartArea />
      <BottomBar />
    </div>
  );
}
